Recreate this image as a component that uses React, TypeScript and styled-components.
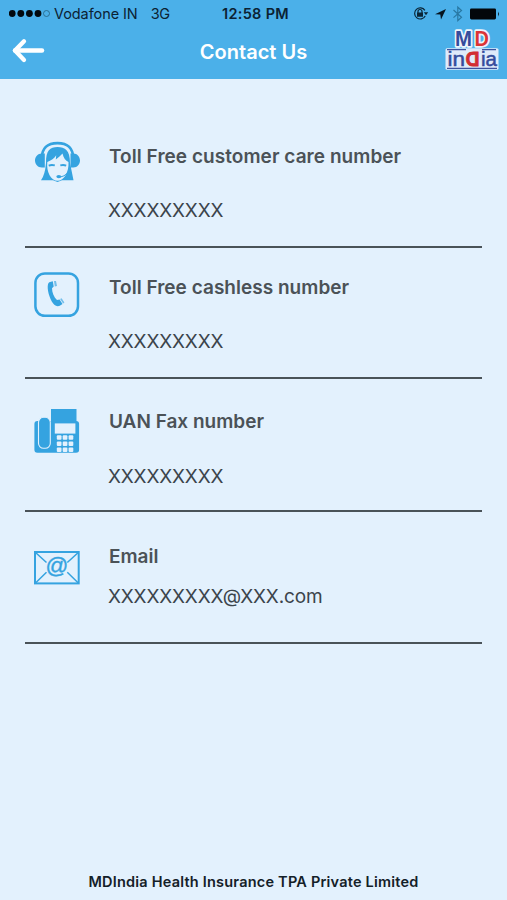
import React from "react";
import styled, { createGlobalStyle } from "styled-components";

const GlobalStyle = createGlobalStyle`
  body { margin: 0; background: #e3f1fd; }
  * { box-sizing: border-box; }
`;

const Screen = styled.div`
  display: flex;
  flex-direction: column;
  width: 507px;
  height: 900px;
  overflow: hidden;
  background: #e3f1fd;
  font-family: Inter, "Liberation Sans", sans-serif;
`;

const Header = styled.header`
  height: 79px;
  flex: none;
  background: #4bb0e9;
`;

const StatusBar = styled.div`
  display: grid;
  grid-template-columns: 1fr auto 1fr;
  align-items: center;
  height: 28px;
  padding: 0 6px 0 9px;
  color: #0b2233;
  font-size: 14.5px;
  line-height: 28px;
  white-space: pre;
`;

const Carrier = styled.div`
  display: flex;
  align-items: center;
`;

const CarrierName = styled.span`
  margin-left: 4px;
  letter-spacing: -0.08px;
`;

const Network = styled.span`
  margin-left: 13px;
  letter-spacing: -0.5px;
`;

const Clock = styled.div`
  font-weight: 600;
  font-size: 14.5px;
  letter-spacing: 0.3px;
  margin-right: -1px;
`;

const StatusIcons = styled.div`
  display: flex;
  justify-content: flex-end;
  align-items: center;
`;

const NavBar = styled.div`
  display: grid;
  grid-template-columns: 64px 1fr 64px;
  align-items: start;
  height: 51px;
`;

const BackButton = styled.button`
  display: block;
  justify-self: start;
  padding: 10px 0 0 12px;
  border: 0;
  background: none;
  line-height: 0;
`;

const Title = styled.h1`
  margin: 0;
  padding-top: 11px;
  text-align: center;
  color: #fff;
  font-size: 20px;
  line-height: 26px;
  font-weight: 600;
  letter-spacing: 0.05px;
`;

const Logo = styled.svg`
  display: block;
  overflow: visible;
`;

const List = styled.main`
  flex: 1;
  padding: 0 25px;
`;

const Row = styled.section<{ $height: number }>`
  display: grid;
  grid-template-columns: 83px 1fr;
  height: ${(p) => p.$height}px;
  border-bottom: 2px solid #4a5358;
`;

const IconCell = styled.div<{ $top: number }>`
  padding: ${(p) => p.$top}px 0 0 9px;
  line-height: 0;
`;

const Details = styled.div<{ $top: number; $gap: number }>`
  display: flex;
  flex-direction: column;
  gap: ${(p) => p.$gap}px;
  padding-top: ${(p) => p.$top}px;
  white-space: nowrap;
`;

const Label = styled.div<{ $spacing: number }>`
  padding-left: 1px;
  color: #4b5257;
  font-size: 19px;
  line-height: 24px;
  font-weight: 600;
  letter-spacing: ${(p) => p.$spacing}px;
`;

const Value = styled.div`
  color: #3b444b;
  font-size: 19px;
  line-height: 24px;
  letter-spacing: -0.15px;
`;

const Footer = styled.footer`
  height: 32px;
  text-align: center;
  color: #142028;
  font-size: 14.5px;
  line-height: 28px;
  font-weight: 600;
  letter-spacing: 0.21px;
  white-space: nowrap;
`;

const BLUE = "#35a3e0";
const PALE = "#e3f1fd";

const SignalDots = () => (
  <svg width="41" height="10" viewBox="0 0 41 10">
    {[3.2, 11.8, 20.4, 29].map((x) => (
      <circle key={x} cx={x} cy="4.5" r="3.4" fill="#03090e" />
    ))}
    <circle cx="37.5" cy="4.5" r="3" fill="none" stroke="#24617f" strokeWidth="0.8" />
  </svg>
);

const DeviceIcons = () => (
  <svg width="88" height="20" viewBox="413 4 88 20">
    <g fill="none" stroke="#0a2536" strokeWidth="1.2">
      <path d="M424.9 10.3A5.6 5.6 0 1 0 425.2 16" />
      <path d="M418 13v-1.5a2 2 0 0 1 4 0V13" />
    </g>
    <path d="M417 12.6h6v4.2h-6zM423.8 12.2h4.4l-2.2 3z" fill="#0a2536" />
    <path d="M446 9 L435 14.2 L440.3 14.6 L441 19.5 Z" fill="#06141f" />
    <path d="M453.5 10l8 7.2-3.7 3.4V7.2l3.7 3.3L453.5 17.6" fill="none" stroke="#2878a3" strokeWidth="1.2" />
    <rect x="470" y="8.4" width="26" height="11" rx="1.4" fill="#03070a" />
    <path d="M498 11.5q1.8 2.4 0 5z" fill="#03070a" />
  </svg>
);

const BackArrow = () => (
  <svg width="34" height="26" viewBox="12 38 34 26" fill="none" stroke="#fff" strokeLinecap="round" strokeLinejoin="round">
    <path d="M42 50.6H15" strokeWidth="4.5" />
    <path d="M24 41.2L15 50.6L24 60" strokeWidth="4.3" />
  </svg>
);

const BrandLogo = () => (
  <Logo width="60" height="46" viewBox="443 28 60 46" fontFamily="Liberation Sans, Arial, sans-serif" fontWeight="700">
    <rect x="445.5" y="48.2" width="53" height="21.6" rx="1.5" fill="#dfeafa" />
    <g stroke="#eef4fb" strokeWidth="3.5" strokeLinejoin="round" paintOrder="stroke">
      <text x="455" y="45.8" fontSize="21.5" textLength="17" lengthAdjust="spacingAndGlyphs" fill="#354c9c">M</text>
      <text x="474.6" y="45.8" fontSize="21.5" textLength="14.4" lengthAdjust="spacingAndGlyphs" fill="#dc3437">D</text>
    </g>
    <g fill="#354c9c" fontWeight="400" stroke="#354c9c" strokeWidth="0.5">
      <text x="447.4" y="66" fontSize="20" textLength="17.5" lengthAdjust="spacingAndGlyphs">in</text>
      <text x="481" y="66" fontSize="20" textLength="16" lengthAdjust="spacingAndGlyphs">ia</text>
    </g>
    <text transform="translate(479.6 66) scale(-1 1)" fontSize="21" textLength="14" lengthAdjust="spacingAndGlyphs" fill="#d22e32" stroke="#d22e32" strokeWidth="0.8">D</text>
    <path d="M447 49.7h19M482 49.7h14M447 68.3h50" stroke="#3d529e" strokeWidth="1.3" />
  </Logo>
);

const OperatorIcon = () => (
  <svg width="48" height="42" viewBox="34 141 48 42">
    <path d="M46 163C46 150 50 147 57.5 147S70 150 70 163L73.5 180.3H62L57.5 182L53 180.3H41Q45 175 46 163Z" fill={BLUE} />
    <path d="M47.3 162C52 160 54.5 158 56.2 155.2L55.8 159.5C59 157 61 155.3 62.5 153.5C63.5 158 65.5 160.5 68.5 162C69 172 64 180.8 57.5 180.8S46.2 172 47.3 162Z" fill={PALE} />
    <path d="M41.5 159C42 147 48 143.2 57.5 143.2S73 147 73.5 159" stroke={BLUE} strokeWidth="2.7" fill="none" />
    <path d="M44 158C45 149 49 146 57.5 146S70 149 71 158" stroke={PALE} strokeWidth="1.2" fill="none" />
    <path d="M42 153.5H44.8V167.5H42C37.5 167.5 35 164 35 160.5S37.5 153.5 42 153.5ZM70.5 153.5H73.3C77.5 153.5 80 157 80 160.5S77.5 167.5 73.3 167.5H70.5Z" fill={BLUE} />
    <path d="M48.7 165.6Q51.5 164.6 54.8 165.4M60.3 165.4Q63.5 164.6 66.2 165.6" stroke={BLUE} strokeWidth="1.9" fill="none" />
    <path d="M70.5 167Q68 175.5 60.5 177" stroke={BLUE} strokeWidth="1" fill="none" />
    <ellipse cx="58.8" cy="176.6" rx="2.5" ry="1.7" fill={BLUE} />
  </svg>
);

const PhoneIcon = () => (
  <svg width="46" height="46" viewBox="34 272 46 46">
    <rect x="35.4" y="273.4" width="42.6" height="42.4" rx="9.5" fill="none" stroke={BLUE} strokeWidth="2.5" />
    <path d="M49.3 282.2L52.8 281.3L53.7 286.6L52 288.2C52 292.6 54 297.1 57 300.1L59.6 299.4L62.5 303.9L59.8 305.8C57.8 306.7 55.2 306.2 53.2 303.5C49.3 298.5 46.8 288.8 48 284.3Q48.4 282.8 49.3 282.2Z" fill={BLUE} />
    <path d="M54 281.1L56 280.9L57 286L54.8 286.4ZM60.1 299.1L61.6 298.2L64.4 302.4L63.1 303.4Z" fill={BLUE} opacity="0.65" />
  </svg>
);

const FaxIcon = () => (
  <svg width="46" height="46" viewBox="34 408 46 46">
    <rect x="34.4" y="421" width="44.7" height="31.8" rx="3" fill={BLUE} />
    <path d="M51 409H76.5V422H51z" fill={BLUE} />
    <rect x="38.5" y="417.3" width="11.8" height="31" rx="5" fill={BLUE} stroke={PALE} strokeWidth="1.1" />
    <path d="M54.8 423.4h20.6v10.2H54.8z" fill={PALE} />
    {[435.3, 441.5, 447.5].map((y) =>
      [56.8, 62.7, 68.6].map((x) => (
        <rect key={`${x}-${y}`} x={x} y={y} width="4.7" height="4.4" rx="1" fill={PALE} />
      ))
    )}
  </svg>
);

const MailIcon = () => (
  <svg width="46" height="36" viewBox="34 550 46 36">
    <g fill="none" stroke={BLUE}>
      <rect x="35" y="552" width="43.7" height="31.4" strokeWidth="2" />
      <path d="M35.5 552.5L46.5 562.5M78.3 552.5L67.3 562.5M35.5 583L46.5 572.3M78.3 583L67.3 572.3" strokeWidth="1.5" />
    </g>
    <text x="57" y="573.4" textAnchor="middle" fontFamily="Liberation Sans, Arial, sans-serif" fontSize="22.5" fill={BLUE} stroke={BLUE} strokeWidth="0.4">@</text>
  </svg>
);

const contacts = [
  { label: "Toll Free customer care number", value: "XXXXXXXXX", icon: <OperatorIcon />, height: 169, iconTop: 62, top: 66, gap: 30, spacing: 0.05 },
  { label: "Toll Free cashless number", value: "XXXXXXXXX", icon: <PhoneIcon />, height: 131, iconTop: 24, top: 28, gap: 30, spacing: 0.02 },
  { label: "UAN Fax number", value: "XXXXXXXXX", icon: <FaxIcon />, height: 133, iconTop: 29, top: 31, gap: 31, spacing: 0 },
  { label: "Email", value: "XXXXXXXXX@XXX.com", icon: <MailIcon />, height: 132, iconTop: 38, top: 33, gap: 16, spacing: 0 },
];

export default function App() {
  return (
    <Screen>
      <GlobalStyle />
      <Header>
        <StatusBar>
          <Carrier>
            <SignalDots />
            <CarrierName>Vodafone IN</CarrierName>
            <Network>3G</Network>
          </Carrier>
          <Clock>12:58 PM</Clock>
          <StatusIcons><DeviceIcons /></StatusIcons>
        </StatusBar>
        <NavBar>
          <BackButton aria-label="Back"><BackArrow /></BackButton>
          <Title>Contact Us</Title>
          <BrandLogo />
        </NavBar>
      </Header>
      <List>
        {contacts.map((c) => (
          <Row key={c.label} $height={c.height}>
            <IconCell $top={c.iconTop}>{c.icon}</IconCell>
            <Details $top={c.top} $gap={c.gap}>
              <Label $spacing={c.spacing}>{c.label}</Label>
              <Value>{c.value}</Value>
            </Details>
          </Row>
        ))}
      </List>
      <Footer>MDIndia Health Insurance TPA Private Limited</Footer>
    </Screen>
  );
}
